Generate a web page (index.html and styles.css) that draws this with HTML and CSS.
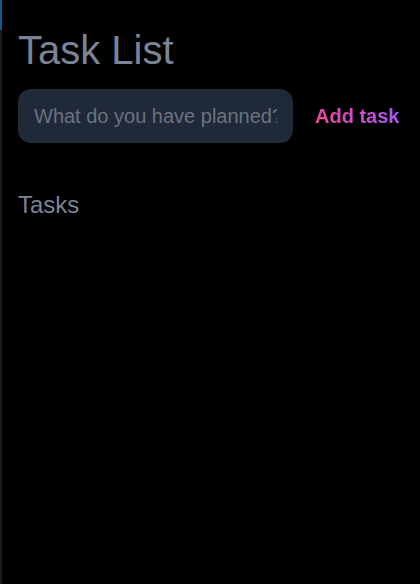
FILE: index.html
```html
<!DOCTYPE html>
<html lang="en">
<head>
<meta charset="utf-8">
<title>Task List</title>
<link rel="stylesheet" href="styles.css">
</head>
<body>
<div class="page">
  <div class="rail"><div class="rail-top"></div></div>
  <main class="main">
    <h1 class="title">Task List</h1>
    <form class="add-form">
      <input class="task-input" type="text" placeholder="What do you have planned?">
      <button class="add-btn" type="button"><span class="grad">Add task</span></button>
    </form>
    <h2 class="section">Tasks</h2>
  </main>
</div>
</body>
</html>
```
FILE: styles.css
```css
html, body {
  margin: 0;
  padding: 0;
  background: #000;
  height: 100%;
}
body {
  font-family: "Liberation Sans", Arial, sans-serif;
}
.page {
  display: flex;
  min-height: 584px;
}
.rail {
  width: 2px;
  background: #1a1a1a;
  display: flex;
  flex-direction: column;
}
.rail-top {
  height: 30px;
  background: #1b5688;
}
.main {
  flex: 1;
  padding: 0 16px;
  display: flex;
  flex-direction: column;
}
.title {
  margin: 27px 0 0;
  font-size: 40px;
  font-weight: 400;
  line-height: 1.15;
  color: #7b8496;
}
.add-form {
  display: flex;
  align-items: center;
  gap: 22px;
  margin-top: 16px;
}
.task-input {
  width: 275px;
  height: 54px;
  box-sizing: border-box;
  border: none;
  outline: none;
  border-radius: 13px;
  background: #1f2937;
  padding: 0 16px;
  font-family: "Liberation Sans", Arial, sans-serif;
  font-size: 20px;
  color: #d1d5db;
}
.task-input::placeholder {
  color: #6b7280;
}
.add-btn {
  background: none;
  border: none;
  padding: 0;
  font-family: "Liberation Sans", Arial, sans-serif;
  font-size: 20px;
  font-weight: 700;
  cursor: pointer;
}
.grad {
  background: linear-gradient(90deg, #ec4899, #a855f7);
  -webkit-background-clip: text;
  background-clip: text;
  color: transparent;
}
.section {
  margin: 48px 0 0;
  font-size: 24px;
  font-weight: 400;
  line-height: 1.15;
  color: #7b8496;
}
```
